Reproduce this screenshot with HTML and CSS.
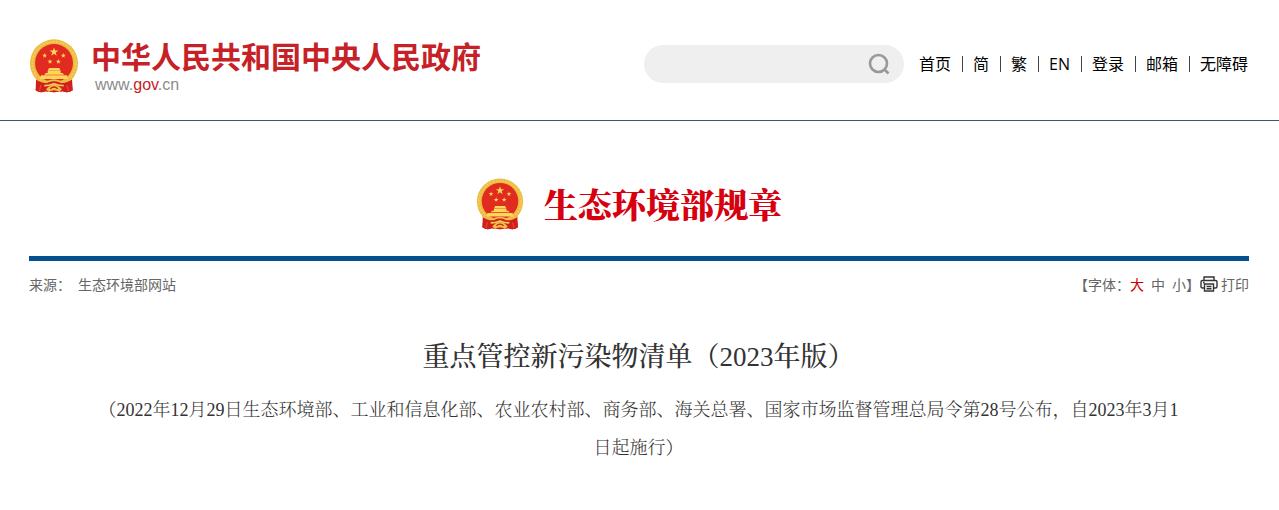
FILE: index.html
```html
<!DOCTYPE html>
<html lang="zh-CN">
<head>
<meta charset="utf-8">
<meta name="viewport" content="width=device-width, initial-scale=1">
<title>重点管控新污染物清单（2023年版）</title>
<link rel="stylesheet" href="styles.css">
</head>
<body>
<svg class="sprite" aria-hidden="true">
  <defs>
    <polygon id="star" points="0,-12 2.8,-3.8 11.4,-3.7 4.5,1.5 7,9.7 0,4.8 -7,9.7 -4.5,1.5 -11.4,-3.7 -2.8,-3.8"/>
    <symbol id="emblem" viewBox="0 0 150 162">
      <path d="M22 100 L20 154 Q34 164 49 157 L75 160 L101 157 Q117 164 131 154 L128 100Z" fill="#cf1c1c"/>
      <circle cx="75" cy="73" r="72" fill="#ecb93f"/>
      <circle cx="75" cy="73" r="65" fill="none" stroke="#f3ca55" stroke-width="7" stroke-dasharray="7 3"/>
      <circle cx="75" cy="72" r="57" fill="#e22b20"/>
      <g fill="#fbd65a">
        <use href="#star" transform="translate(75 39) scale(1.15)"/>
        <use href="#star" transform="translate(47 50) scale(.65)"/>
        <use href="#star" transform="translate(103 50) scale(.65)"/>
        <use href="#star" transform="translate(63 68) scale(.65)"/>
        <use href="#star" transform="translate(88 68) scale(.65)"/>
        <path d="M60 87H91L95 95H56Z"/>
        <path d="M56 96H95V102H101L105 107H46L50 102H56Z"/>
        <path d="M36 109H114L118 120H32Z"/>
      </g>
      <path d="M24 118Q42 132 56 128Q75 119 94 128Q108 132 126 118L131 154Q117 164 101 157L75 160L49 157Q34 164 20 154Z" fill="#d11f1c"/>
      <path d="M22 119Q42 132 56 128Q75 119 94 128Q108 132 128 119" fill="none" stroke="#edbc44" stroke-width="6"/>
      <path d="M51 151Q75 124 99 151L91 159Q75 149 59 159Z" fill="#efbe45"/>
      <path d="M64 149Q75 139 86 149" fill="none" stroke="#c91a1c" stroke-width="4"/>
      <path d="M46 140Q60 140 75 134Q90 140 104 140" fill="none" stroke="#f4cd60" stroke-width="5"/>
      <path d="M36 138L31 156M114 138L119 156" stroke="#e34332" stroke-width="4"/>
    </symbol>
  </defs>
</svg>

<header class="site-header">
  <a class="brand" href="#">
    <svg class="brand-emblem" aria-hidden="true"><use href="#emblem"/></svg>
    <span class="brand-text">
      <span class="brand-name">中华人民共和国中央人民政府</span>
      <span class="brand-url">www.<b>gov</b>.cn</span>
    </span>
  </a>
  <form class="search">
    <input class="search-input" type="text" aria-label="搜索">
    <button class="search-button" type="button" aria-label="搜索">
      <svg viewBox="0 0 22 22" width="22" height="22" fill="none" stroke="#999" stroke-width="2.6"><circle cx="10.5" cy="10.5" r="8.5"/><path d="M16 16l4.5 4.5"/></svg>
    </button>
  </form>
  <nav class="top-nav">
    <a href="#">首页</a>
    <a href="#">简</a>
    <a href="#">繁</a>
    <a href="#">EN</a>
    <a href="#">登录</a>
    <a href="#">邮箱</a>
    <a href="#">无障碍</a>
  </nav>
</header>

<main class="content">
  <div class="channel">
    <svg class="channel-emblem" aria-hidden="true"><use href="#emblem"/></svg>
    <h2 class="channel-name">生态环境部规章</h2>
  </div>
  <div class="meta">
    <div class="source"><span>来源：</span><span>生态环境部网站</span></div>
    <div class="tools">
      <span>【字体：</span>
      <span class="sizes">
        <button class="size active" type="button">大</button>
        <button class="size" type="button">中</button>
        <button class="size" type="button">小</button>
      </span>
      <span>】</span>
      <button class="print" type="button">
        <svg viewBox="0 0 18 16" width="18" height="16" fill="none" stroke="#333" stroke-width="1.4"><path d="M4 4V1h10v3M4 12H2.500Q1 12 1 10.500V6Q1 4.500 2.500 4.500H15.500Q17 4.500 17 6V10.500Q17 12 15.500 12H14M4.500 8h9v7h-9zM6.500 10.500h5M6.500 12.800h5M3 6.500h1.500"/></svg>
        打印
      </button>
    </div>
  </div>
  <article class="document">
    <h1 class="doc-title">重点管控新污染物清单（2023年版）</h1>
    <p class="doc-note">（2022年12月29日生态环境部、工业和信息化部、农业农村部、商务部、海关总署、国家市场监督管理总局令第28号公布，自2023年3月1日起施行）</p>
  </article>
</main>
</body>
</html>
```
FILE: styles.css
```css
* { box-sizing: border-box; }
body {
  margin: 0;
  background: #fff;
  color: #333;
  font-family: "Noto Sans CJK SC", sans-serif;
  text-spacing-trim: space-all;
}
a { color: inherit; text-decoration: none; }
button {
  padding: 0;
  border: 0;
  background: none;
  color: inherit;
  font: inherit;
  cursor: pointer;
}
svg { display: block; flex: none; }
.sprite { position: absolute; width: 0; height: 0; }

.site-header {
  display: flex;
  align-items: center;
  padding: 38px 31px 26px 29px;
  border-bottom: 1px solid #3b556b;
}
.brand { display: flex; gap: 12px; margin-right: auto; }
.brand-emblem { width: 50px; height: 56px; }
.brand-text { display: flex; flex-direction: column; gap: 4px; white-space: nowrap; }
.brand-name {
  color: #c62127;
  font-size: 30px;
  font-weight: 700;
  line-height: 34px;
}
.brand-url {
  padding-left: 4px;
  color: #8c8c8c;
  font: 16px/18px "Liberation Sans", Arial, sans-serif;
}
.brand-url b { color: #c62127; font-weight: 400; }

.search {
  display: flex;
  align-items: center;
  width: 260px;
  height: 38px;
  margin: 0 15px 4px 0;
  padding: 0 14px 0 18px;
  border-radius: 19px;
  background: #efefef;
}
.search-input {
  flex: 1;
  min-width: 0;
  border: 0;
  outline: 0;
  background: none;
  font: inherit;
}

.top-nav {
  display: flex;
  align-items: center;
  margin-bottom: 4px;
  color: #000;
  font-family: "Open Sans", "Noto Sans CJK SC", sans-serif;
  font-size: 16px;
  line-height: 16px;
  white-space: nowrap;
}
.top-nav a + a {
  margin-left: 11px;
  padding-left: 10px;
  border-left: 1px solid #444;
}

.content { padding: 0 30px 0 29px; }
.channel {
  display: flex;
  align-items: center;
  justify-content: center;
  gap: 20px;
  padding: 57px 20px 26px 0;
  border-bottom: 5px solid #07508f;
}
.channel-emblem { width: 48px; height: 52px; }
.channel-name {
  margin: 0;
  color: #d7000f;
  font-family: "Noto Serif CJK SC", "Noto Sans CJK SC", serif;
  font-size: 34px;
  font-weight: 900;
  line-height: 48px;
}

.meta {
  display: flex;
  justify-content: space-between;
  padding-top: 13px;
  color: #666;
  font-size: 14px;
  line-height: 20px;
}
.source { display: flex; gap: 7px; }
.tools, .print { display: flex; align-items: center; }
.sizes { display: flex; gap: 7px; }
.size.active { color: #c00; }
.print { gap: 3px; }

.document { padding: 38px 66px 0 65px; text-align: center; }
.doc-title {
  margin: 0;
  font-family: "Liberation Serif", "Noto Serif CJK SC", "Noto Sans CJK SC", serif;
  font-size: 27px;
  font-weight: 500;
  line-height: 50px;
}
.doc-note {
  margin: 9px 0 0;
  font-family: "Liberation Serif", "Noto Serif CJK SC", "Noto Sans CJK SC", serif;
  font-size: 18px;
  font-weight: 300;
  line-height: 38px;
}
```
